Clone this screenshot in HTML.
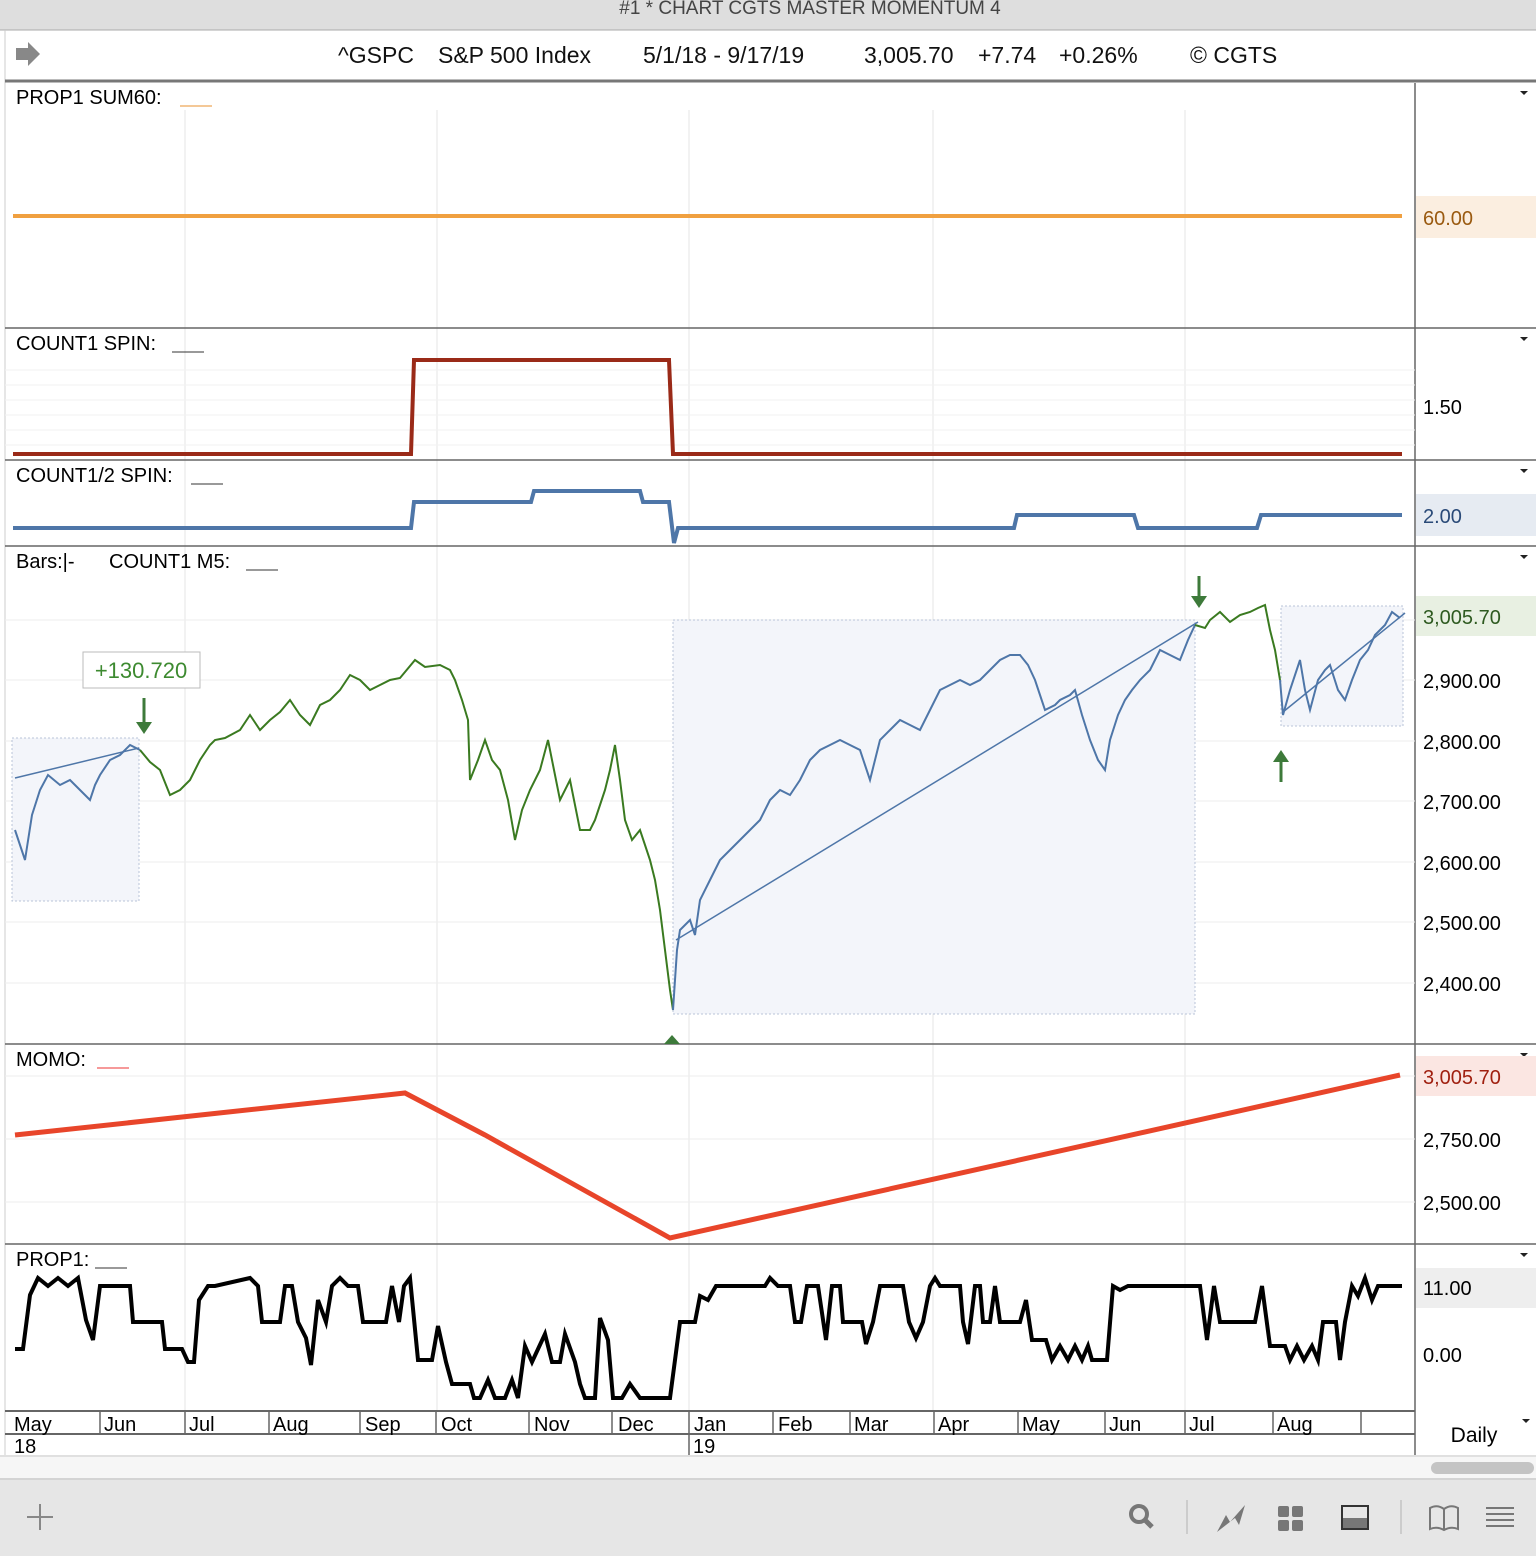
<!DOCTYPE html>
<html><head><meta charset="utf-8"><style>
body{margin:0;width:1536px;height:1556px;overflow:hidden;background:#fff;font-family:"Liberation Sans",sans-serif}
svg{display:block}
text{font-family:"Liberation Sans",sans-serif}
</style></head><body>
<svg width="1536" height="1556" viewBox="0 0 1536 1556" xmlns="http://www.w3.org/2000/svg">
<rect x="0" y="0" width="1536" height="30" fill="#dedede"/>
<text x="810" y="14" font-size="19" fill="#444" text-anchor="middle">#1 * CHART CGTS MASTER MOMENTUM 4</text>
<line x1="0" y1="30" x2="1536" y2="30" stroke="#aaa"/>
<line x1="5" y1="30" x2="5" y2="1478" stroke="#ccc"/>
<path d="M16 48h12v-6l12 12-12 12v-6h-12z" fill="#888"/>
<text font-size="23" y="63" fill="#111"><tspan x="338">^GSPC</tspan><tspan x="438">S&amp;P 500 Index</tspan><tspan x="643">5/1/18 - 9/17/19</tspan><tspan x="864">3,005.70</tspan><tspan x="978">+7.74</tspan><tspan x="1059">+0.26%</tspan><tspan x="1190">© CGTS</tspan></text>
<line x1="5" y1="81" x2="1536" y2="81" stroke="#777" stroke-width="3"/>
<!-- grid verticals -->
<g stroke="#eee" stroke-width="1.5">
<line x1="185" y1="110" x2="185" y2="1410"/><line x1="437" y1="110" x2="437" y2="1410"/><line x1="689" y1="110" x2="689" y2="1410"/><line x1="933" y1="110" x2="933" y2="1410"/><line x1="1185" y1="110" x2="1185" y2="1410"/>
</g>
<!-- panel separators -->
<g stroke="#666" stroke-width="1.5">
<line x1="5" y1="328" x2="1536" y2="328"/><line x1="5" y1="460" x2="1536" y2="460"/><line x1="5" y1="546" x2="1536" y2="546"/><line x1="5" y1="1044" x2="1536" y2="1044"/><line x1="5" y1="1244" x2="1536" y2="1244"/>
<line x1="1415" y1="83" x2="1415" y2="1455"/>
</g>
<g font-size="20" fill="#000">
<text x="16" y="104">PROP1 SUM60:</text><line x1="180" y1="106" x2="212" y2="106" stroke="#e8912f"/>
<text x="16" y="350">COUNT1 SPIN:</text><line x1="172" y1="352" x2="204" y2="352" stroke="#333"/>
<text x="16" y="482">COUNT1/2 SPIN:</text><line x1="191" y1="484" x2="223" y2="484" stroke="#333"/>
<text x="16" y="568">Bars:|-</text><text x="109" y="568">COUNT1 M5:</text><line x1="246" y1="570" x2="278" y2="570" stroke="#333"/>
<text x="16" y="1066">MOMO:</text><line x1="97" y1="1068" x2="129" y2="1068" stroke="#e33"/>
<text x="16" y="1266">PROP1:</text><line x1="95" y1="1268" x2="127" y2="1268" stroke="#333"/>
</g>
<g fill="#222"><path d="M1520 91h8l-4 4z"/><path d="M1520 337h8l-4 4z"/><path d="M1520 469h8l-4 4z"/><path d="M1520 555h8l-4 4z"/><path d="M1520 1053h8l-4 4z"/><path d="M1520 1253h8l-4 4z"/><path d="M1522 1419h8l-4 4z"/></g>
<!-- panel1 -->
<line x1="13" y1="216" x2="1402" y2="216" stroke="#f0a040" stroke-width="4"/>
<rect x="1416" y="196" width="120" height="42" fill="#fbeee0"/>
<text x="1423" y="225" font-size="20" fill="#9a5a10">60.00</text>
<!-- panel2 -->
<g stroke="#f2f2f2"><line x1="5" y1="370" x2="1415" y2="370"/><line x1="5" y1="385" x2="1415" y2="385"/><line x1="5" y1="400" x2="1415" y2="400"/><line x1="5" y1="415" x2="1415" y2="415"/><line x1="5" y1="430" x2="1415" y2="430"/><line x1="5" y1="445" x2="1415" y2="445"/></g>
<polyline points="13,454 411,454 414,360 669,360 673,454 1402,454" fill="none" stroke="#9a2a18" stroke-width="4"/>
<text x="1423" y="414" font-size="20">1.50</text>
<!-- panel3 -->
<polyline points="13,528 411,528 414,502 531,502 534,491 640,491 643,502 669,502 674,543 678,528 1014,528 1017,515 1134,515 1138,528 1257,528 1261,515 1402,515" fill="none" stroke="#4e76a8" stroke-width="4"/>
<rect x="1416" y="494" width="120" height="42" fill="#e6ebf2"/>
<text x="1423" y="523" font-size="20" fill="#2a4a78">2.00</text>
<!-- price panel grid -->
<g stroke="#eee">
<line x1="5" y1="680" x2="1415" y2="680"/><line x1="5" y1="741" x2="1415" y2="741"/><line x1="5" y1="801" x2="1415" y2="801"/><line x1="5" y1="862" x2="1415" y2="862"/><line x1="5" y1="922" x2="1415" y2="922"/><line x1="5" y1="983" x2="1415" y2="983"/><line x1="5" y1="620" x2="1415" y2="620"/>
</g>
<rect x="12" y="738" width="127" height="163" fill="#f3f5fa" stroke="#b8c4d8" stroke-dasharray="2,2"/>
<rect x="673" y="620" width="522" height="394" fill="#f3f5fa" stroke="#b8c4d8" stroke-dasharray="2,2"/>
<rect x="1281" y="606" width="122" height="120" fill="#f3f5fa" stroke="#b8c4d8" stroke-dasharray="2,2"/>
<line x1="15" y1="778" x2="139" y2="748" stroke="#4e76a8" stroke-width="1.5"/>
<line x1="676" y1="940" x2="1198" y2="622" stroke="#4e76a8" stroke-width="1.5"/>
<line x1="1283" y1="712" x2="1405" y2="613" stroke="#4e76a8" stroke-width="1.5"/>
<polyline fill="none" stroke="#4e76a8" stroke-width="2" points="15,830 20,845 25,860 32,815 40,790 48,775 60,785 70,780 80,790 90,800 95,785 100,775 110,760 120,755 130,745 140,750"/>
<polyline fill="none" stroke="#3a7a20" stroke-width="2" points="140,750 150,762 160,770 170,795 180,790 190,780 200,760 210,745 215,740 225,738 240,730 250,715 260,730 270,720 280,712 290,700 300,715 310,725 320,705 330,700 340,690 350,675 360,680 370,690 380,685 390,680 400,678 415,660 425,667 440,665 450,670 455,680 462,700 468,720 470,780 478,760 485,740 492,760 500,770 508,800 515,840 522,810 530,790 540,770 548,740 554,770 560,800 570,780 580,830 590,830 595,820 600,805 605,790 610,770 615,745 620,780 625,820 632,840 640,830 645,845 650,860 655,880 660,910 665,950 670,990 673,1010"/>
<polyline fill="none" stroke="#4e76a8" stroke-width="2" points="673,1010 677,950 680,930 690,920 695,935 700,900 710,880 720,860 730,850 740,840 750,830 760,820 770,800 780,790 790,795 800,780 810,760 820,750 830,745 840,740 850,745 860,750 865,765 870,780 875,760 880,740 890,730 900,720 910,725 920,730 930,710 940,690 950,685 960,680 970,685 980,680 990,670 1000,660 1010,655 1020,655 1028,665 1035,680 1040,695 1045,710 1055,705 1060,700 1070,695 1075,690 1082,715 1090,740 1098,760 1105,770 1110,740 1118,715 1125,700 1132,690 1140,680 1150,670 1160,650 1170,655 1180,660 1188,640 1195,625"/>
<polyline fill="none" stroke="#3a7a20" stroke-width="2" points="1195,625 1205,628 1210,620 1220,612 1230,622 1240,615 1250,612 1258,608 1265,605 1270,630 1275,650 1280,680"/>
<polyline fill="none" stroke="#4e76a8" stroke-width="2" points="1280,680 1283,715 1290,690 1300,660 1305,690 1310,710 1318,680 1325,670 1330,665 1338,690 1345,700 1352,680 1360,660 1368,650 1375,635 1385,625 1392,612 1400,618"/>
<g fill="#3d7a3a" stroke="#3d7a3a" stroke-width="3">
<line x1="144" y1="698" x2="144" y2="728"/><path d="M136 722l8 12 8-12z" stroke="none"/>
<line x1="1199" y1="576" x2="1199" y2="600"/><path d="M1191 596l8 12 8-12z" stroke="none"/>
<line x1="1281" y1="756" x2="1281" y2="782"/><path d="M1273 762l8-12 8 12z" stroke="none"/>
<path d="M664 1044l8-9 8 9z" stroke="none"/>
</g>
<rect x="83" y="652" width="117" height="36" fill="#fff" stroke="#bbb"/>
<text x="141" y="678" font-size="22" fill="#3d8a30" text-anchor="middle">+130.720</text>
<rect x="1416" y="596" width="120" height="40" fill="#e8f0e2"/>
<text font-size="20" fill="#000"><tspan x="1423" y="624" fill="#2e5a20">3,005.70</tspan><tspan x="1423" y="688">2,900.00</tspan><tspan x="1423" y="749">2,800.00</tspan><tspan x="1423" y="809">2,700.00</tspan><tspan x="1423" y="870">2,600.00</tspan><tspan x="1423" y="930">2,500.00</tspan><tspan x="1423" y="991">2,400.00</tspan></text>
<!-- momo -->
<g stroke="#eee"><line x1="5" y1="1076" x2="1415" y2="1076"/><line x1="5" y1="1139" x2="1415" y2="1139"/><line x1="5" y1="1202" x2="1415" y2="1202"/></g>
<polyline points="15,1135 405,1093 485,1135 670,1238 1400,1075" fill="none" stroke="#e8452a" stroke-width="5"/>
<rect x="1416" y="1056" width="120" height="40" fill="#fbe6e2"/>
<text font-size="20"><tspan x="1423" y="1084" fill="#a02010">3,005.70</tspan><tspan x="1423" y="1147">2,750.00</tspan><tspan x="1423" y="1210">2,500.00</tspan></text>
<!-- prop1 -->
<polyline fill="none" stroke="#000" stroke-width="4" points="15,1349 23,1349 30,1295 38,1278 48,1286 58,1278 68,1286 78,1278 86,1320 93,1340 100,1286 110,1286 130,1286 133,1322 162,1322 165,1349 182,1349 188,1362 194,1362 199,1300 208,1286 215,1286 250,1278 258,1286 262,1322 280,1322 285,1286 292,1286 298,1322 306,1338 311,1365 318,1300 326,1322 332,1286 340,1278 348,1286 358,1286 363,1322 386,1322 392,1286 399,1322 404,1286 410,1278 418,1360 432,1360 438,1326 446,1362 452,1384 470,1384 474,1398 480,1398 488,1380 495,1398 505,1398 512,1380 518,1398 525,1346 532,1362 545,1334 552,1362 560,1362 565,1334 575,1362 580,1384 585,1398 595,1398 600,1318 608,1340 613,1398 622,1398 630,1384 640,1398 670,1398 680,1322 695,1322 700,1296 708,1300 716,1286 765,1286 770,1278 778,1286 790,1286 795,1322 801,1322 807,1286 818,1286 826,1340 832,1286 840,1286 843,1322 862,1322 866,1344 873,1322 880,1286 903,1286 909,1322 916,1338 923,1322 930,1286 935,1278 940,1286 960,1286 963,1322 968,1344 975,1286 980,1286 983,1322 990,1322 995,1286 1000,1322 1020,1322 1026,1300 1032,1340 1046,1340 1052,1360 1060,1346 1068,1360 1075,1346 1082,1360 1088,1346 1092,1360 1107,1360 1113,1286 1120,1290 1128,1286 1200,1286 1207,1340 1214,1286 1220,1322 1255,1322 1262,1286 1270,1346 1285,1346 1290,1360 1297,1346 1304,1360 1312,1346 1318,1360 1323,1322 1336,1322 1340,1360 1345,1322 1352,1286 1358,1296 1365,1278 1372,1300 1378,1286 1402,1286"/>
<rect x="1416" y="1268" width="120" height="40" fill="#eee"/>
<text font-size="20"><tspan x="1423" y="1295">11.00</tspan><tspan x="1423" y="1362">0.00</tspan></text>
<!-- date axis -->
<line x1="5" y1="1411" x2="1415" y2="1411" stroke="#666" stroke-width="2"/>
<line x1="5" y1="1434" x2="1415" y2="1434" stroke="#666" stroke-width="2"/>
<g stroke="#666" stroke-width="1.5"><line x1="100" y1="1411" x2="100" y2="1434"/><line x1="185" y1="1411" x2="185" y2="1434"/><line x1="269" y1="1411" x2="269" y2="1434"/><line x1="360" y1="1411" x2="360" y2="1434"/><line x1="436" y1="1411" x2="436" y2="1434"/><line x1="529" y1="1411" x2="529" y2="1434"/><line x1="612" y1="1411" x2="612" y2="1434"/><line x1="689" y1="1411" x2="689" y2="1456"/><line x1="773" y1="1411" x2="773" y2="1434"/><line x1="850" y1="1411" x2="850" y2="1434"/><line x1="934" y1="1411" x2="934" y2="1434"/><line x1="1018" y1="1411" x2="1018" y2="1434"/><line x1="1105" y1="1411" x2="1105" y2="1434"/><line x1="1185" y1="1411" x2="1185" y2="1434"/><line x1="1273" y1="1411" x2="1273" y2="1434"/><line x1="1361" y1="1411" x2="1361" y2="1434"/></g>
<text font-size="20" y="1431"><tspan x="14">May</tspan><tspan x="104">Jun</tspan><tspan x="189">Jul</tspan><tspan x="273">Aug</tspan><tspan x="365">Sep</tspan><tspan x="441">Oct</tspan><tspan x="534">Nov</tspan><tspan x="618">Dec</tspan><tspan x="694">Jan</tspan><tspan x="778">Feb</tspan><tspan x="854">Mar</tspan><tspan x="938">Apr</tspan><tspan x="1022">May</tspan><tspan x="1109">Jun</tspan><tspan x="1189">Jul</tspan><tspan x="1277">Aug</tspan></text>
<text font-size="20" y="1453"><tspan x="14">18</tspan><tspan x="693">19</tspan></text>
<text x="1474" y="1442" font-size="21" text-anchor="middle">Daily</text>
<!-- scrollbar -->
<rect x="0" y="1456" width="1536" height="22" fill="#f6f6f6"/>
<line x1="0" y1="1456" x2="1536" y2="1456" stroke="#e0e0e0" stroke-width="2"/>
<rect x="1431" y="1462" width="103" height="12" rx="6" fill="#c4c4c4"/>
<!-- toolbar -->
<rect x="0" y="1478" width="1536" height="78" fill="#e6e6e6"/>
<line x1="0" y1="1479" x2="1536" y2="1479" stroke="#d4d4d4" stroke-width="2"/>
<path d="M40 1504v26M27 1517h26" stroke="#888" stroke-width="2"/>
<circle cx="1139" cy="1514" r="8" fill="none" stroke="#777" stroke-width="4"/><line x1="1145" y1="1520" x2="1152" y2="1527" stroke="#777" stroke-width="5"/>
<line x1="1187" y1="1500" x2="1187" y2="1534" stroke="#ccc" stroke-width="2"/>
<line x1="1401" y1="1500" x2="1401" y2="1534" stroke="#ccc" stroke-width="2"/>
<path d="M1217 1532l9-17 4 7 15-17-6 20-4-7z" fill="#777"/>
<g fill="#777"><rect x="1278" y="1506" width="11" height="11" rx="2"/><rect x="1292" y="1506" width="11" height="11" rx="2"/><rect x="1278" y="1520" width="11" height="11" rx="2"/><rect x="1292" y="1520" width="11" height="11" rx="2"/></g>
<rect x="1342" y="1506" width="26" height="23" fill="none" stroke="#333" stroke-width="2"/><rect x="1343" y="1518" width="24" height="10" fill="#777"/>
<path d="M1430 1508q7-4 14 1q7-5 14-1v21q-7-3-14 1q-7-4-14-1zM1444 1509v20" fill="none" stroke="#777" stroke-width="2"/>
<g stroke="#777" stroke-width="2"><line x1="1486" y1="1508" x2="1514" y2="1508"/><line x1="1486" y1="1514" x2="1514" y2="1514"/><line x1="1486" y1="1520" x2="1514" y2="1520"/><line x1="1486" y1="1526" x2="1514" y2="1526"/></g>
</svg>
</body></html>
